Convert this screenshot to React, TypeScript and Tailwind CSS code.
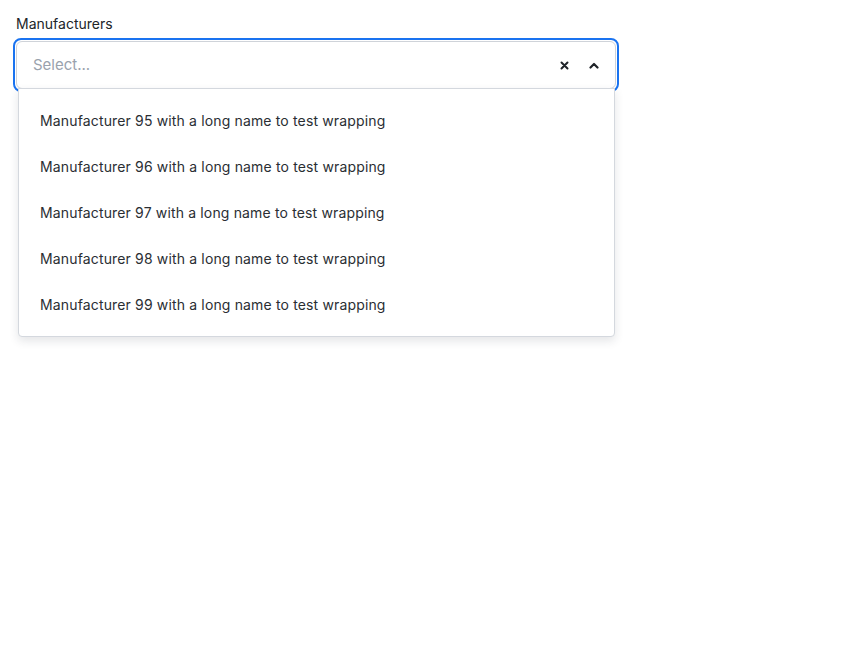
export default function App() {
  const items = [95, 96, 97, 98, 99];
  return (
    <div className="min-h-screen bg-white px-[13px] pt-[15px] font-['Inter',sans-serif] text-[#212529]">
      <div className="w-[606px]">
        <label className="ml-[3px] block text-[14px] leading-[18px] text-[#212529]">Manufacturers</label>
        <div className="relative mt-[5px]">
          <div className="rounded-[8px] border-2 border-[#1a73f0] p-px">
            <div className="flex h-[48px] items-center rounded-[6px] border border-[#cfd3d9] bg-white pl-4 pr-[16px]">
              <span className="flex-1 text-[15px] text-[#9aa2ad]">Select...</span>
              <svg width="9" height="9" viewBox="0 0 9 9" className="mr-[20px]">
                <path d="M1.5 1.5 L7.5 7.5 M7.5 1.5 L1.5 7.5" stroke="#1f2328" strokeWidth="2" strokeLinecap="round" />
              </svg>
              <svg width="10" height="7" viewBox="0 0 10 7">
                <path d="M1.5 5.5 L5 2 L8.5 5.5" fill="none" stroke="#1f2328" strokeWidth="2.2" strokeLinecap="round" strokeLinejoin="round" />
              </svg>
            </div>
          </div>
          <div className="absolute left-[5px] top-[50px] w-[597px] rounded-b-[4px] border border-[#d4d8de] bg-white pt-[8px] pb-[9px] shadow-[0_4px_10px_rgba(30,40,60,0.12)]">
            {items.map((n) => (
              <div key={n} className="flex h-[46px] items-center px-[21px] text-[14px] tracking-[0.15px] text-[#2a2e33]">
                Manufacturer {n} with a long name to test wrapping
              </div>
            ))}
          </div>
        </div>
      </div>
    </div>
  );
}
